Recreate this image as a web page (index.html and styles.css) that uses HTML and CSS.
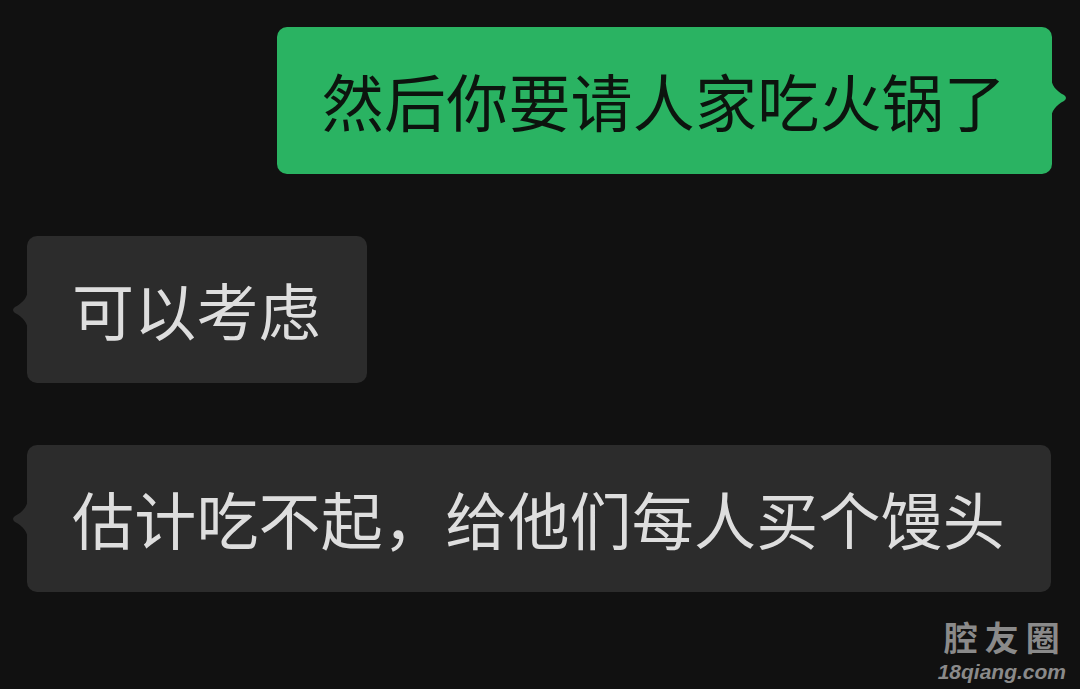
FILE: index.html
```html
<!DOCTYPE html>
<html lang="zh-CN">
<head>
<meta charset="utf-8">
<link rel="stylesheet" href="styles.css">
</head>
<body>
<div class="chat">
  <div class="row row-right">
    <div class="bubble bubble-green">然后你要请人家吃火锅了<svg class="tail tail-right" width="18" height="44" viewBox="0 0 18 44"><path d="M0 0 C0 9 5 15 13 19 Q17 22 13 25 C5 29 0 35 0 44 Z"/></svg></div>
  </div>
  <div class="row row-left">
    <div class="bubble bubble-gray">可以考虑<svg class="tail tail-left" width="18" height="44" viewBox="0 0 18 44"><path d="M18 0 C18 9 13 15 5 19 Q1 22 5 25 C13 29 18 35 18 44 Z"/></svg></div>
  </div>
  <div class="row row-left">
    <div class="bubble bubble-gray">估计吃不起，给他们每人买个馒头<svg class="tail tail-left" width="18" height="44" viewBox="0 0 18 44"><path d="M18 0 C18 9 13 15 5 19 Q1 22 5 25 C13 29 18 35 18 44 Z"/></svg></div>
  </div>
</div>
<div class="watermark">
  <div class="wm-title">腔友圈</div>
  <div class="wm-url">18qiang.com</div>
</div>
</body>
</html>
```
FILE: styles.css
```css
html, body {
  margin: 0;
  padding: 0;
  background: #111111;
  width: 1080px;
  height: 689px;
  overflow: hidden;
}
body {
  position: relative;
  font-family: "Noto Sans CJK SC", "Noto Sans", sans-serif;
}
.chat {
  display: flex;
  flex-direction: column;
  gap: 62px;
  padding: 27px 28px 0 27px;
}
.row {
  display: flex;
}
.row-right {
  justify-content: flex-end;
}
.row-left {
  justify-content: flex-start;
}
.bubble {
  position: relative;
  font-size: 62px;
  line-height: 63px;
  letter-spacing: 0.2px;
  padding: 42px 46px 42px 45px;
  border-radius: 10px;
  white-space: nowrap;
}
.bubble-green {
  background: #2ab362;
  color: #0c140e;
}
.bubble-gray {
  background: #2c2c2c;
  color: #dedede;
}
.tail {
  position: absolute;
  top: 50%;
  transform: translateY(-50%);
}
.tail-right {
  right: -17px;
  margin-top: -3px;
}
.tail-right path {
  fill: #2ab362;
}
.tail-left {
  left: -17px;
}
.tail-left path {
  fill: #2c2c2c;
}
.watermark {
  position: absolute;
  right: 14px;
  bottom: 6px;
  display: flex;
  flex-direction: column;
  align-items: center;
  gap: 5px;
  color: #8a8a8a;
}
.wm-title {
  font-size: 34px;
  line-height: 38px;
  font-weight: 700;
  letter-spacing: 7px;
  margin-right: -7px;
}
.wm-url {
  font-family: "Liberation Sans", Arial, sans-serif;
  font-size: 21px;
  line-height: 22px;
  font-weight: 700;
  font-style: italic;
}
```
